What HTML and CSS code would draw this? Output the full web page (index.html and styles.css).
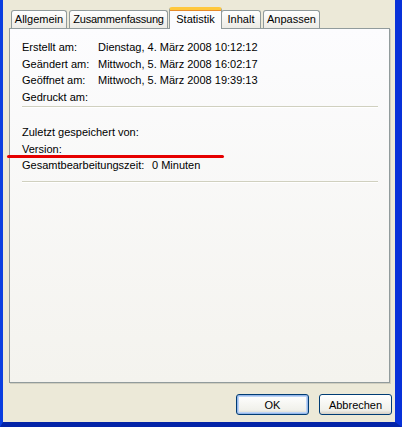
FILE: index.html
```html
<!DOCTYPE html>
<html lang="de">
<head>
    <meta charset="UTF-8">
    <title>Eigenschaften</title>
    <link rel="stylesheet" href="styles.css">
</head>
<body>
    <div class="window">
        <div class="dialog">
            <div class="tabs">
                <div class="tab w-allgemein">Allgemein</div>
                <div class="tab w-zusammen">Zusammenfassung</div>
                <div class="tab active w-statistik">Statistik</div>
                <div class="tab w-inhalt">Inhalt</div>
                <div class="tab w-anpassen">Anpassen</div>
            </div>
            <div class="panel">
                <div class="rows">
                    <span>Erstellt am:</span><span>Dienstag, 4. März 2008 10:12:12</span>
                    <span>Geändert am:</span><span>Mittwoch, 5. März 2008 16:02:17</span>
                    <span>Geöffnet am:</span><span>Mittwoch, 5. März 2008 19:39:13</span>
                    <span>Gedruckt am:</span><span></span>
                </div>
                <div class="sep"></div>
                <div class="rows second">
                    <span>Zuletzt gespeichert von:</span>
                    <span>Version:</span>
                    <span><span class="label-wide">Gesamtbearbeitungszeit:</span>0 Minuten</span>
                </div>
                <div class="sep"></div>
            </div>
            <div class="buttons">
                <button class="btn default">OK</button>
                <button class="btn">Abbrechen</button>
            </div>
            <div class="redline"></div>
        </div>
    </div>
</body>
</html>
```

FILE: styles.css
```css
body {
    margin: 0;
    padding: 0;
    width: 402px;
    height: 427px;
    overflow: hidden;
    font-family: Tahoma, "Liberation Sans", Arial, sans-serif;
    font-size: 11px;
    color: #000000;
    background-color: #0831d9;
}

.window {
    width: 402px;
    height: 427px;
    box-sizing: border-box;
    border-left: 3px solid #0a3ee0;
    border-right: 7px solid #0831d9;
    border-bottom: 5px solid #0424a8;
    background-color: #ece9d8;
}

.dialog {
    position: relative;
    height: 100%;
    padding: 8px 2px 0 6px;
    box-sizing: border-box;
}

.tabs {
    display: flex;
    align-items: flex-end;
    height: 21px;
    padding-left: 2px;
    position: relative;
    z-index: 1;
}

.tab {
    box-sizing: border-box;
    height: 18px;
    line-height: 17px;
    text-align: center;
    white-space: nowrap;
    margin-right: 2px;
    border: 1px solid #919b9c;
    border-bottom: none;
    border-radius: 3px 3px 0 0;
    background: linear-gradient(#ffffff, #ecebe5);
    margin-bottom: 1px;
}

.w-allgemein { width: 56px; }
.w-zusammen { width: 99px; letter-spacing: -0.2px; }
.w-statistik { width: 53px; }
.w-inhalt { width: 40px; }
.w-anpassen { width: 57px; }

.tab.active {
    height: 22px;
    line-height: 18px;
    margin: 0 -1px 0 -1px;
    border-top: 3px solid #ffc83c;
    box-shadow: inset 0 1px 0 #e68b2c;
    background: #fcfcfe;
    position: relative;
    z-index: 1;
}

.panel {
    height: 355px;
    width: 381px;
    margin-top: -1px;
    border: 1px solid #919b9c;
    box-shadow: 1px 1px 0 #d0cebf;
    background: linear-gradient(#fcfcfe, #f4f3ee);
    padding: 10px 11px 0 12px;
    box-sizing: border-box;
}

.rows {
    display: grid;
    grid-template-columns: 76px 1fr;
    grid-auto-rows: 16.5px;
    align-items: center;
}

.rows.second {
    grid-template-columns: 1fr;
    margin-top: 16px;
}

.label-wide {
    display: inline-block;
    width: 130px;
}

.sep {
    height: 1px;
    margin-top: 1px;
    background-color: #d0d0bf;
    border-bottom: 1px solid #ffffff;
}

.rows.second + .sep {
    margin-top: 7px;
}

.buttons {
    display: flex;
    justify-content: flex-end;
    gap: 10px;
    margin-top: 11px;
    padding-right: 1px;
}

.btn {
    width: 73px;
    height: 21px;
    font-family: inherit;
    font-size: 11px;
    color: #000000;
    border: 1px solid #003c74;
    border-radius: 3px;
    background: linear-gradient(#ffffff, #f0f0ea 80%, #d6d0c5);
    padding: 0;
}

.btn.default {
    box-shadow: inset 0 0 0 1px #98b8ea, inset 0 0 0 2px #bcd4f6;
}

.redline {
    position: absolute;
    left: 4px;
    top: 155px;
    width: 217px;
    height: 3px;
    border-radius: 2px;
    background-color: #e60000;
}
```
